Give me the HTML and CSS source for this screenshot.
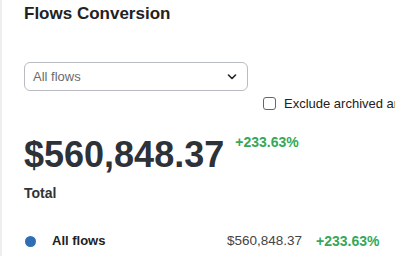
FILE: index.html
```html
<!DOCTYPE html>
<html lang="en">
    <head>
        <meta charset="UTF-8">
        <title>Flows Conversion</title>
        <link rel="stylesheet" href="styles.css">
    </head>
    <body>
        <div class="panel">
            <h1 class="title">Flows Conversion</h1>
            <div class="controls">
                <div class="select">
                    <span>All flows</span>
                    <svg class="chevron" width="10" height="6" viewBox="0 0 10 6"><path d="M1.5 1l3.5 3.5 3.5-3.5" fill="none" stroke="#222" stroke-width="1.6" stroke-linecap="round" stroke-linejoin="round"/></svg>
                </div>
                <label class="check">
                    <span class="box"></span>
                    <span class="check-text">Exclude archived and draft flows</span>
                </label>
            </div>
            <div class="summary">
                <span class="amount">$560,848.37</span>
                <span class="change">+233.63%</span>
            </div>
            <div class="label">Total</div>
            <div class="row">
                <span class="dot"></span>
                <span class="name">All flows</span>
                <span class="value">$560,848.37</span>
                <span class="change row-change">+233.63%</span>
            </div>
        </div>
    </body>
</html>
```
FILE: styles.css
```css
body {
    margin: 0;
    background-color: white;
    font-family: "Liberation Sans", Arial, sans-serif;
    color: #222;
    overflow: hidden;
}
.panel {
    border-left: 2px solid #eeeeee;
    padding: 4px 0 0 22px;
    white-space: nowrap;
    height: 256px;
    box-sizing: border-box;
    overflow: hidden;
}
.title {
    margin: 0;
    font-size: 17px;
    font-weight: bold;
    line-height: 20px;
    color: #222;
}
.controls {
    margin-top: 38px;
}
.select {
    width: 224px;
    height: 29px;
    box-sizing: border-box;
    border: 1px solid #b8bcc2;
    border-radius: 6px;
    display: flex;
    align-items: center;
    justify-content: space-between;
    padding: 0 10px 0 8px;
    font-size: 13px;
    color: #6b6b6b;
}
.check {
    display: flex;
    align-items: center;
    gap: 8px;
    margin: 5px 0 0 239px;
    font-size: 13px;
    line-height: 15px;
    color: #222;
    overflow: hidden;
}
.box {
    flex-shrink: 0;
    width: 13px;
    height: 13px;
    box-sizing: border-box;
    border: 1px solid #666;
    border-radius: 3px;
}
.summary {
    display: flex;
    align-items: flex-start;
    gap: 11px;
    margin-top: 24px;
}
.amount {
    font-size: 36px;
    font-weight: bold;
    color: #2d3138;
    line-height: 40px;
}
.change {
    color: #34a85a;
    font-weight: bold;
    font-size: 14px;
    line-height: 14px;
}
.label {
    margin-top: 10px;
    font-size: 14px;
    font-weight: bold;
    color: #333;
    line-height: 16px;
}
.row {
    display: flex;
    align-items: center;
    margin-top: 32px;
    font-size: 13px;
    line-height: 16px;
}
.dot {
    flex-shrink: 0;
    width: 11px;
    height: 11px;
    border-radius: 50%;
    background-color: #2f6db5;
    margin-left: 1px;
}
.name {
    font-weight: bold;
    margin-left: 16px;
    width: 175px;
}
.value {
    color: #444;
    width: 89px;
    font-size: 13.5px;
}
.row-change {
    font-size: 14px;
}
```
